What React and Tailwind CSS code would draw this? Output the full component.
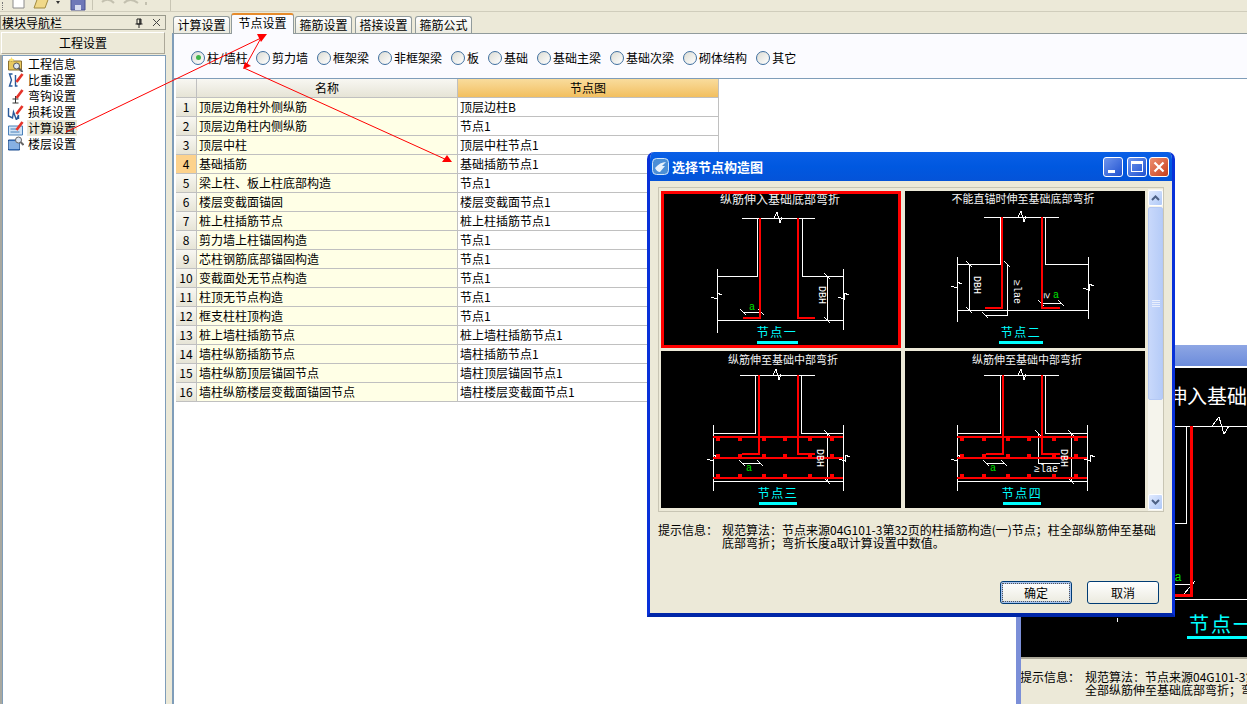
import React from "react";

const radios = [
  { label: "柱/墙柱", checked: true },
  { label: "剪力墙" },
  { label: "框架梁" },
  { label: "非框架梁" },
  { label: "板" },
  { label: "基础" },
  { label: "基础主梁" },
  { label: "基础次梁" },
  { label: "砌体结构" },
  { label: "其它" },
];

const rows = [
  ["顶层边角柱外侧纵筋", "顶层边柱B"],
  ["顶层边角柱内侧纵筋", "节点1"],
  ["顶层中柱", "顶层中柱节点1"],
  ["基础插筋", "基础插筋节点1"],
  ["梁上柱、板上柱底部构造", "节点1"],
  ["楼层变截面锚固", "楼层变截面节点1"],
  ["桩上柱插筋节点", "桩上柱插筋节点1"],
  ["剪力墙上柱锚固构造", "节点1"],
  ["芯柱钢筋底部锚固构造", "节点1"],
  ["变截面处无节点构造", "节点1"],
  ["柱顶无节点构造", "节点1"],
  ["框支柱柱顶构造", "节点1"],
  ["桩上墙柱插筋节点", "桩上墙柱插筋节点1"],
  ["墙柱纵筋插筋节点", "墙柱插筋节点1"],
  ["墙柱纵筋顶层锚固节点", "墙柱顶层锚固节点1"],
  ["墙柱纵筋楼层变截面锚固节点", "墙柱楼层变截面节点1"],
];

const tabs = ["计算设置", "节点设置", "箍筋设置", "搭接设置", "箍筋公式"];

const Pencil = () => <path d="M9 10 L15 2" stroke="#e5342a" strokeWidth="2.6" />;

const navItems = [
  {
    label: "工程信息",
    icon: (
      <>
        <path d="M1 5 H14 V14 H1 Z" fill="#e8c860" stroke="#8a7030" />
        <path d="M4 1 L5 3 L7 3 L5.5 4.5 L6 6 L4 5 L2 6 L2.5 4.5 L1 3 L3 3 Z" fill="#f8e070" />
        <circle cx="9" cy="10" r="3" fill="#dfe8f4" stroke="#555" />
        <path d="M11 12 L15 16" stroke="#555" strokeWidth="2" />
      </>
    ),
  },
  {
    label: "比重设置",
    icon: (
      <>
        <path d="M5 2 H2 L4 8 L2 14 H5 M8 3 V14 H10" fill="none" stroke="#2a5a9a" strokeWidth="1.4" />
        <Pencil />
      </>
    ),
  },
  {
    label: "弯钩设置",
    icon: (
      <>
        <path d="M8 8 V15 M5 11 H11 M5 15 H11" fill="none" stroke="#333" />
        <Pencil />
      </>
    ),
  },
  {
    label: "损耗设置",
    icon: (
      <>
        <path d="M1 4 V12 L5 14 L6 8 L9 16 L11 11 V15" fill="none" stroke="#2a5a9a" strokeWidth="1.4" />
        <Pencil />
      </>
    ),
  },
  {
    label: "计算设置",
    active: true,
    icon: (
      <>
        <path d="M1 6 H15 V15 H1 Z" fill="#cfe3f6" stroke="#4a80b8" />
        <path d="M3 9 H9 M3 12 H12" stroke="#4a80b8" />
        <Pencil />
      </>
    ),
  },
  {
    label: "楼层设置",
    icon: (
      <>
        <path d="M1 4 H12 V14 H1 Z" fill="#3f7fd0" stroke="#1f4f90" />
        <path d="M1 6 H12 M1 8 H12 M1 10 H12 M1 12 H12" stroke="#cfe3f6" />
        <circle cx="11" cy="4" r="3" fill="#dfe8f4" stroke="#666" />
        <path d="M13 6 L16 9" stroke="#666" strokeWidth="2" />
      </>
    ),
  },
];

// horizontal break mark sitting on a column top line
const TopBreak = ({ x, y }) => (
  <path d={`M${x - 4} ${y} L${x - 1} ${y - 6} L${x + 2} ${y + 5} L${x + 4} ${y - 1}`} fill="none" stroke="#fff" />
);

// break mark sitting on a vertical side line
const SideBreak = ({ x, y }) => (
  <path d={`M${x - 6} ${y + 1} L${x} ${y + 3} L${x} ${y - 3} L${x + 5} ${y - 1}`} fill="none" stroke="#fff" />
);

const Tick = ({ x, y }) => <path d={`M${x - 3} ${y - 3} L${x + 3} ${y + 3}`} stroke="#fff" />;

const CellTitle = ({ x, y, size = 11, children }) => (
  <text x={x} y={y} fill="#f2f2f2" fontSize={size} textAnchor="middle" dominantBaseline="middle">
    {children}
  </text>
);

const NodeLabel = ({ x, y, w, children }) => (
  <>
    <text x={x} y={y + 1} fill="#00ffff" fontSize="12" letterSpacing="1.5" textAnchor="middle" dominantBaseline="middle">
      {children}
    </text>
    <rect x={x - w / 2} y={y + 8} width={w} height="3" fill="#00ffff" />
  </>
);

const VText = ({ x, y, children }) => (
  <text
    x={x}
    y={y}
    fill="#fff"
    fontSize="10"
    textAnchor="middle"
    dominantBaseline="middle"
    transform={`rotate(90 ${x} ${y})`}
    fontFamily="Liberation Mono, monospace"
  >
    {children}
  </text>
);

const Green = ({ x, y }) => (
  <text x={x} y={y} fill="#00e000" fontSize="10" textAnchor="middle" dominantBaseline="middle" fontFamily="Liberation Mono, monospace">
    a
  </text>
);

function DrawOne() {
  return (
    <svg width="240" height="157" viewBox="661 191 240 157" shapeRendering="crispEdges" className="block">
      <CellTitle x={780} y={201} size={12}>纵筋伸入基础底部弯折</CellTitle>
      <path d="M742 218.5 H815 M757.5 218 V276.5 H717 M717.5 269 V333 M802.5 218 V276.5 H844 M843.5 269 V330 M717 320.5 H844 M827.5 276 V320 M743 312.5 H761" fill="none" stroke="#fff" />
      <TopBreak x={778} y={218} />
      <SideBreak x={717} y={296} />
      <SideBreak x={844} y={296} />
      <Tick x={827} y={276} />
      <Tick x={827} y={320} />
      <Tick x={743} y={312} />
      <Tick x={761} y={312} />
      <path d="M760 218 V318 H743 M798 218 V318 H815" fill="none" stroke="#f00" strokeWidth="2" />
      <VText x={822} y={295}>DBH</VText>
      <Green x={752} y={307} />
      <NodeLabel x={777} y={333} w={41}>节点一</NodeLabel>
    </svg>
  );
}

function DrawTwo() {
  return (
    <svg width="240" height="157" viewBox="905 191 240 157" shapeRendering="crispEdges" className="block">
      <CellTitle x={1023} y={200}>不能直锚时伸至基础底部弯折</CellTitle>
      <path d="M984 217.5 H1059 M1000.5 217 V264.5 H957 M957.5 257 V322 M1045.5 217 V264.5 H1089 M1088.5 257 V319 M957 310.5 H1089 M969.5 264 V310 M1007.5 264 V315.5 H985 M1041 303.5 H1061" fill="none" stroke="#fff" />
      <TopBreak x={1022} y={217} />
      <SideBreak x={957} y={285} />
      <SideBreak x={1089} y={287} />
      <Tick x={969} y={264} />
      <Tick x={969} y={310} />
      <Tick x={1007} y={264} />
      <Tick x={985} y={315} />
      <Tick x={1041} y={303} />
      <Tick x={1061} y={303} />
      <path d="M1002 217 V308 H985 M1042 217 V308 H1060" fill="none" stroke="#f00" strokeWidth="2" />
      <VText x={977} y={285}>DBH</VText>
      <VText x={1017} y={292}>≥lae</VText>
      <VText x={1047} y={296}>≥</VText>
      <Green x={1056} y={295} />
      <NodeLabel x={1021} y={333} w={44}>节点二</NodeLabel>
    </svg>
  );
}

// bars with stirrup dots shared by the two lower drawings
const Bars = ({ x1, x2, dots }) => (
  <>
    <path d={`M${x1} 437 H${x2} M${x1} 458 H${x2} M${x1} 478 H${x2}`} stroke="#f00" strokeWidth="2" fill="none" />
    {dots.map((d) => (
      <React.Fragment key={d}>
        <rect x={d - 2} y={438} width="4" height="3" fill="#f00" />
        <rect x={d - 2} y={454} width="4" height="3" fill="#f00" />
        <rect x={d - 2} y={474} width="4" height="3" fill="#f00" />
      </React.Fragment>
    ))}
  </>
);

function DrawThree() {
  return (
    <svg width="240" height="157" viewBox="661 351 240 157" shapeRendering="crispEdges" className="block">
      <CellTitle x={783} y={361}>纵筋伸至基础中部弯折</CellTitle>
      <path d="M740 375.5 H815 M755.5 375 V433.5 H713 M713.5 425 V491 M801.5 375 V433.5 H843 M843.5 425 V491 M713 481.5 H843 M827.5 433 V481 M742 463.5 H760" fill="none" stroke="#fff" />
      <TopBreak x={777} y={375} />
      <SideBreak x={713} y={458} />
      <SideBreak x={845} y={458} />
      <Tick x={827} y={433} />
      <Tick x={827} y={481} />
      <Tick x={742} y={463} />
      <Tick x={760} y={463} />
      <Bars x1={713} x2={843} dots={[718, 740, 764, 785, 810, 832]} />
      <path d="M759 375 V454 H742 M798 375 V454 H815" fill="none" stroke="#f00" strokeWidth="2" />
      <VText x={820} y={458}>DBH</VText>
      <Green x={749} y={468} />
      <NodeLabel x={778} y={494} w={38}>节点三</NodeLabel>
    </svg>
  );
}

function DrawFour() {
  return (
    <svg width="240" height="157" viewBox="905 351 240 157" shapeRendering="crispEdges" className="block">
      <CellTitle x={1027} y={361}>纵筋伸至基础中部弯折</CellTitle>
      <path d="M984 375.5 H1059 M1000.5 375 V433.5 H957 M957.5 425 V491 M1045.5 375 V433.5 H1087 M1087.5 425 V491 M957 481.5 H1087 M1071.5 433 V481 M986 463.5 H1004 M1038.5 433 V463.5 H1060" fill="none" stroke="#fff" />
      <TopBreak x={1022} y={375} />
      <SideBreak x={957} y={458} />
      <SideBreak x={1090} y={458} />
      <Tick x={1071} y={433} />
      <Tick x={1071} y={481} />
      <Tick x={1038} y={433} />
      <Tick x={986} y={463} />
      <Tick x={1004} y={463} />
      <Bars x1={957} x2={1087} dots={[962, 984, 1008, 1029, 1054, 1076]} />
      <path d="M1003 375 V454 H986 M1042 375 V454 H1060" fill="none" stroke="#f00" strokeWidth="2" />
      <VText x={1064} y={458}>DBH</VText>
      <Green x={993} y={468} />
      <text x={1046} y={469} fill="#fff" fontSize="10" textAnchor="middle" dominantBaseline="middle" fontFamily="Liberation Mono, monospace">≥lae</text>
      <NodeLabel x={1022} y={494} w={38}>节点四</NodeLabel>
    </svg>
  );
}

function ScrollButton({ up }) {
  return (
    <div className="flex h-[16px] w-[15px] items-center justify-center rounded-[2px] border border-white bg-gradient-to-br from-[#e1eafe] to-[#aec8f7]">
      <svg width="9" height="6" viewBox="0 0 9 6">
        <path d={up ? "M1 5 L4.5 1.5 L8 5" : "M1 1 L4.5 4.5 L8 1"} fill="none" stroke="#4d6185" strokeWidth="2" />
      </svg>
    </div>
  );
}

function XpButton({ focused, children }) {
  return (
    <button
      className={`flex h-[23px] w-[72px] items-center justify-center rounded-[3px] border border-[#003c74] bg-gradient-to-b from-white to-[#ebeadf] text-[12px] text-black ${
        focused ? "outline-1 -outline-offset-3 outline-dotted outline-[#555] shadow-[inset_0_0_0_2px_#a9c4ee]" : ""
      }`}
    >
      {children}
    </button>
  );
}

function NodeDialog() {
  return (
    <div className="absolute left-[647px] top-[152px] flex h-[465px] w-[528px] flex-col overflow-hidden rounded-t-[7px] border-x-[3px] border-b-[4px] border-x-[#0831d9] border-b-[#0026a8] bg-[#ece9d8]">
      <div className="-mx-[3px] flex h-[29px] shrink-0 items-center bg-gradient-to-b from-[#0a5fe6] via-[#0058e0] to-[#0453d8] pl-[5px] pr-[6px]">
        <svg width="17" height="17" viewBox="0 0 17 17">
          <rect x="0.5" y="0.5" width="16" height="16" rx="4" fill="#4b8fd6" stroke="#cfe4f8" />
          <path d="M3 10 Q8 4 14 4 L10 8 H13 L8 14 Q5 14 3 10" fill="#e8f2fb" />
        </svg>
        <span className="ml-[3px] flex-1 text-[13px] font-bold text-white">选择节点构造图</span>
        <div className="flex gap-[2px]">
          <div className="flex h-[20px] w-[20px] items-end rounded-[3px] border border-white bg-gradient-to-br from-[#6f94ec] to-[#1f50d0] pb-[3px] pl-[4px]">
            <div className="h-[3px] w-[7px] bg-white" />
          </div>
          <div className="ml-[2px] flex h-[20px] w-[20px] items-center justify-center rounded-[3px] border border-white bg-gradient-to-br from-[#6f94ec] to-[#1f50d0]">
            <div className="h-[11px] w-[12px] border border-t-[3px] border-white" />
          </div>
          <div className="flex h-[20px] w-[20px] items-center justify-center rounded-[3px] border border-white bg-gradient-to-br from-[#ec8f70] to-[#c93c16]">
            <svg width="12" height="12" viewBox="0 0 12 12">
              <path d="M1.5 1.5 L10.5 10.5 M10.5 1.5 L1.5 10.5" stroke="#fff" strokeWidth="2.2" />
            </svg>
          </div>
        </div>
      </div>
      <div className="ml-[8px] mr-[8px] mt-[6px] flex h-[325px] shrink-0 border border-[#c8c5b4] bg-[#ece9d8] pl-[2px] pt-[3px]">
        <div className="grid grid-cols-[240px_240px] content-start gap-x-[4px] gap-y-[3px]">
          <div className="relative h-[157px] w-[240px] bg-black">
            <DrawOne />
            <div className="absolute inset-0 border-[3px] border-[#f00]" />
          </div>
          <div className="h-[157px] w-[240px] bg-black"><DrawTwo /></div>
          <div className="h-[157px] w-[240px] bg-black"><DrawThree /></div>
          <div className="h-[157px] w-[240px] bg-black"><DrawFour /></div>
        </div>
        <div className="-mt-[2px] ml-[3px] flex h-[322px] w-[16px] flex-col items-center bg-[#f5f4ec] py-[1px]">
          <ScrollButton up />
          <div className="mt-[1px] flex h-[193px] w-[15px] items-center justify-center rounded-[2px] border border-[#b4c8f4] bg-gradient-to-r from-[#c8d8fb] to-[#b6ccf8]">
            <div className="h-[7px] w-[8px] border-y-[3px] border-double border-[#e8eefc]" />
          </div>
          <div className="flex-1" />
          <ScrollButton />
        </div>
      </div>
      <div className="ml-[8px] mt-[11px] flex text-[12px] leading-[13px] text-black">
        <span className="w-[64px] shrink-0">提示信息：</span>
        <p className="w-[436px]">规范算法：节点来源04G101-3第32页的柱插筋构造(一)节点；柱全部纵筋伸至基础底部弯折；弯折长度a取计算设置中数值。</p>
      </div>
      <div className="flex-1" />
      <div className="mb-[9px] mr-[13px] flex justify-end gap-[15px]">
        <XpButton focused>确定</XpButton>
        <XpButton>取消</XpButton>
      </div>
    </div>
  );
}

function BackWindow() {
  return (
    <div className="absolute left-[1016px] top-[345px] flex h-[359px] w-[231px] flex-col overflow-hidden border-l-[5px] border-[#7b8fd8] bg-[#ece9d8]">
      <div className="h-[21px] shrink-0 bg-gradient-to-b from-[#8ea6e4] to-[#6c8cdb]" />
      <div className="h-[2px] shrink-0 bg-white" />
      <svg width="226" height="289" viewBox="1021 368 226 289" shapeRendering="crispEdges" className="block shrink-0 bg-black">
        <text x="1127" y="399" fill="#fff" fontSize="20" dominantBaseline="middle">纵筋伸入基础底部弯折</text>
        <path d="M1175 426.5 H1247 M1186.5 426 V523.5 H1170 M1170 599.5 H1247 M1175 584.5 H1190 M1117.5 618 V622" fill="none" stroke="#fff" />
        <path d="M1212 426 L1219 417 L1224 434 L1229 426 M1184 594 L1195 581" fill="none" stroke="#fff" />
        <path d="M1191 426 V595 H1170" fill="none" stroke="#f00" strokeWidth="3" />
        <text x="1178" y="578" fill="#00e000" fontSize="12" textAnchor="middle" dominantBaseline="middle" fontFamily="Liberation Mono, monospace">a</text>
        <text x="1189" y="627" fill="#00ffff" fontSize="20" letterSpacing="2" dominantBaseline="middle">节点一</text>
        <rect x="1187" y="636" width="60" height="3" fill="#00ffff" />
      </svg>
      <div className="h-[2px] shrink-0 bg-[#aca899]" />
      <div className="-ml-px mt-[11px] flex whitespace-nowrap text-[12px] leading-[13px] text-black">
        <span className="w-[65px] shrink-0">提示信息：</span>
        <div>
          <div>规范算法：节点来源04G101-3第32页的柱插筋构造(一)节点；柱</div>
          <div>全部纵筋伸至基础底部弯折；弯折长度a取计算设置中数值。</div>
        </div>
      </div>
    </div>
  );
}

function Toolbar() {
  return (
    <div className="flex h-[12px] shrink-0 items-end overflow-hidden border-b border-[#d0cdbc] bg-[#ece9d8] pl-[2px]">
      <div className="mb-[1px] h-[8px] w-[2px] border-l border-dotted border-[#777]" />
      <svg width="170" height="12" viewBox="0 0 170 12" className="-ml-[4px] block">
        <path d="M13 -2 H24 V9 H13 Z" fill="#fff" stroke="#8a8a8a" />
        <path d="M34 9 L38 -2 H49 L45 9 Z" fill="#f0d888" stroke="#a08a40" />
        <path d="M56 2 H60 L58 5 Z" fill="#333" />
        <path d="M71 -2 H85 V11 H71 Z" fill="#6f78b8" stroke="#4a5290" />
        <rect x="75" y="6" width="6" height="5" fill="#d8dcf0" />
        <path d="M92.5 0 V11" stroke="#c8c5b4" />
        <path d="M102 3 Q108 -2 114 4 M124 4 Q130 -2 138 4 M146 3 V6" fill="none" stroke="#c4c1b0" strokeWidth="2" />
      </svg>
      <div className="h-[12px] w-px bg-[#c8c5b4]" />
    </div>
  );
}

function NavPanel() {
  return (
    <div className="flex w-[166px] shrink-0 flex-col">
      <div className="flex h-[15px] items-center border border-[#9a9a8c] bg-[#ece9d8] pl-[1px] pr-[3px] text-[12px] text-black">
        <span className="flex-1">模块导航栏</span>
        <svg width="10" height="10" viewBox="0 0 10 10" className="mr-[8px]">
          <path d="M3 1 H7 V6 H3 Z M1.5 6 H8.5 M5 6 V10" fill="none" stroke="#222" />
          <path d="M6 1 V6" stroke="#222" strokeWidth="1.5" />
        </svg>
        <svg width="9" height="9" viewBox="0 0 9 9" className="mr-[1px]">
          <path d="M1 1 L8 8 M8 1 L1 8" stroke="#444" />
        </svg>
      </div>
      <div className="mx-[1px] mt-[2px] flex h-[22px] items-center justify-center border border-t-white border-l-white border-r-[#aca899] border-b-[#aca899] bg-[#ece9d8] text-[12px] text-black">
        工程设置
      </div>
      <div className="mt-[1px] flex-1 border-l-2 border-l-[#a8a8a0]">
        <div className="h-full border-x border-t border-[#7f9db9] bg-white pl-[4px]">
          {navItems.map((item) => (
            <div key={item.label} className="flex h-[16px] items-center">
              <svg width="17" height="16" viewBox="0 0 16 16" className="shrink-0">{item.icon}</svg>
              <span className={`ml-[3px] px-[1px] text-[12px] leading-[16px] text-black ${item.active ? "bg-[#ece9d8]" : ""}`}>
                {item.label}
              </span>
            </div>
          ))}
        </div>
      </div>
    </div>
  );
}

function Tabs() {
  return (
    <div className="-mt-[2px] flex h-[20px] items-end pl-[1px]">
      {tabs.map((t, i) =>
        i === 1 ? (
          <div key={t} className="relative z-10 -mb-px mr-px flex h-[21px] w-[63px] items-center justify-center rounded-t-[3px] border-x border-[#919b9c] border-t-[2px] border-t-[#e68b2c] bg-[#fbfbff] pb-[3px] text-[12px] text-black">
            {t}
          </div>
        ) : (
          <div key={t} className={`flex h-[17px] w-[57px] items-center justify-center rounded-t-[3px] border-x border-t border-[#919b9c] bg-gradient-to-b from-white to-[#ecebe0] text-[12px] text-black ${i === 0 ? "mr-px" : "mr-[3px]"}`}>
            {t}
          </div>
        )
      )}
    </div>
  );
}

function NodeGrid() {
  return (
    <div className="ml-[2px] w-[543px] text-[12px] text-black">
      <div className="grid h-[19px] grid-cols-[21px_261px_261px]">
        <div className="border-r border-b border-[#c0c0c0] bg-gradient-to-b from-[#f8f7f2] to-[#e6e4d6]" />
        <div className="flex items-center justify-center border-r border-b border-[#c0c0c0] bg-gradient-to-b from-[#f8f7f2] to-[#e6e4d6]">名称</div>
        <div className="flex items-center justify-center border-r border-b border-[#c0c0c0] bg-gradient-to-b from-[#f9dc9c] to-[#f2bf5e]">节点图</div>
      </div>
      {rows.map((row, i) => (
        <div key={row[0]} className="grid h-[19px] grid-cols-[21px_261px_261px]">
          <div className={`flex items-center justify-center border-r border-b border-[#c0c0c0] ${i === 3 ? "bg-[#fdd28c]" : "bg-gradient-to-b from-[#f8f7f2] to-[#e6e4d6]"}`}>
            {i + 1}
          </div>
          <div className="flex items-center whitespace-nowrap border-r border-b border-[#c0c0c0] bg-[#ffffe6] pl-[2px]">{row[0]}</div>
          <div className="flex items-center whitespace-nowrap border-r border-b border-[#c0c0c0] bg-white pl-[2px]">{row[1]}</div>
        </div>
      ))}
    </div>
  );
}

function Arrows() {
  return (
    <svg width="1247" height="704" viewBox="0 0 1247 704" className="pointer-events-none absolute left-0 top-0">
      <path d="M66 132 L261 38 M261 38 L245 67 M244 68 L447 160" fill="none" stroke="#f00" />
      <path d="M257 34 L267 34 L261 42 Z M243 69 L245 62 L251 66 Z M447 155 L442 162 L452 162 Z" fill="#f00" />
    </svg>
  );
}

export default function App() {
  return (
    <div className="relative flex h-[704px] w-[1247px] flex-col overflow-hidden bg-[#ece9d8] font-['Noto_Sans_CJK_SC','Liberation_Sans',sans-serif]">
      <Toolbar />
      <div className="flex min-h-0 flex-1 pt-[3px]">
        <NavPanel />
        <div className="ml-[6px] flex min-w-0 flex-1 flex-col">
          <Tabs />
          <div className="flex flex-1 flex-col border-l-2 border-t border-l-[#7f9db9] border-t-[#919b9c] bg-white">
            <div className="flex h-[45px] shrink-0 items-center gap-[9px] border-b border-[#7f9db9] bg-[#fbfbff] pl-[17px] pt-[3px]">
              {radios.map((r) => (
                <div key={r.label} className="flex items-center gap-[2px] whitespace-nowrap text-[12px] text-black">
                  <div className="flex h-[14px] w-[14px] items-center justify-center rounded-full border border-[#3f6f9f] bg-gradient-to-br from-[#dcdcd4] to-white">
                    {r.checked && <div className="h-[5px] w-[5px] rounded-full bg-[#3fb54a]" />}
                  </div>
                  <span className={r.checked ? "w-[40px]" : ""}>{r.label}</span>
                </div>
              ))}
            </div>
            <NodeGrid />
          </div>
        </div>
      </div>
      <Arrows />
      <BackWindow />
      <NodeDialog />
    </div>
  );
}
